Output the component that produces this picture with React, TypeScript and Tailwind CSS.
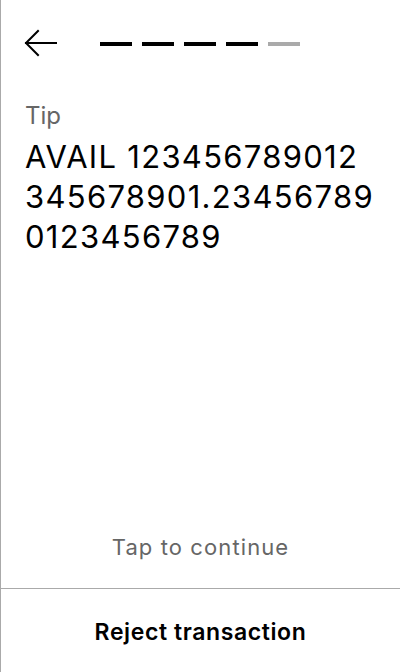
function BackArrow() {
  return (
    <svg width="34" height="30" viewBox="0 0 34 30" fill="none" stroke="black" strokeWidth="2" strokeLinecap="square">
      <path d="M2 14 H32" />
      <path d="M14 2 L2 14 L14 26" />
    </svg>
  )
}

function Progress({ total, done }: { total: number; done: number }) {
  return (
    <div className="flex gap-[10px]">
      {Array.from({ length: total }).map((_, i) => (
        <div key={i} className={i < done ? 'h-[4px] w-[32px] bg-black' : 'h-[4px] w-[32px] bg-[#aaaaaa]'} />
      ))}
    </div>
  )
}

export default function App() {
  return (
    <div className="flex h-[672px] w-[400px] flex-col border-l border-[#aaaaaa] bg-white text-black" style={{ fontFamily: 'Inter, "Noto Sans", sans-serif' }}>
      {/* Header */}
      <div className="flex items-center gap-[42px] pl-[23px] pt-[29px]">
        <BackArrow />
        <Progress total={5} done={4} />
      </div>

      {/* Content */}
      <div className="flex flex-1 flex-col px-[24px] pt-[43px]">
        <div className="text-[24px] leading-[28px] text-[#666666]">Tip</div>
        <div className="mt-[7px] whitespace-nowrap text-[31px] leading-[40px] tracking-[1.3px]">
          AVAIL 123456789012
          <br />
          345678901.23456789
          <br />
          0123456789
        </div>
        <div className="mt-auto pb-[27px] text-center text-[22px] leading-[28px] tracking-[1.1px] text-[#666666]">Tap to continue</div>
      </div>

      {/* Footer */}
      <div className="flex h-[84px] items-center justify-center border-t border-[#aaaaaa] pt-[4px]">
        <span className="text-[23px] font-semibold tracking-[0.6px]">Reject transaction</span>
      </div>
    </div>
  )
}
